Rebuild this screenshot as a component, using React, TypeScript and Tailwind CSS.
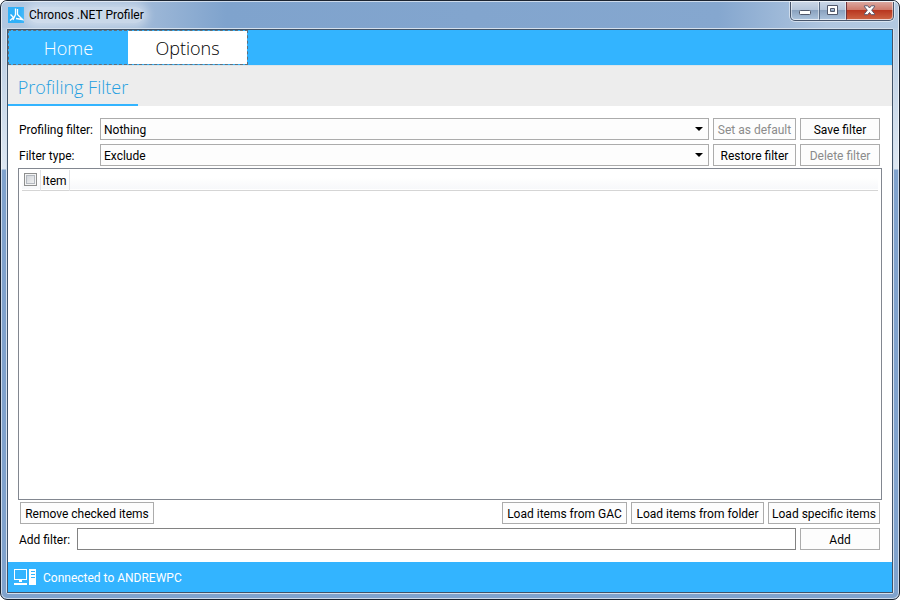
import React from 'react';

function AppLogo() {
  return (
    <svg width="16" height="16" viewBox="0 0 16 16" className="shrink-0" aria-hidden="true">
      <rect width="16" height="16" fill="#2fb0f8" />
      <path d="M7.500 1.500v6L5 13M2.500 7.500L5.500 10.500 2 13.500M9.500 2v5.500L14.500 12.500 8 11.500" fill="none" stroke="#fff" strokeWidth="1.300" />
    </svg>
  );
}

function ComputerIcon() {
  return (
    <svg width="22" height="16" viewBox="0 0 22 16" className="shrink-0" shapeRendering="crispEdges" aria-hidden="true">
      <path d="M.5.5h12v10H.5z" fill="none" stroke="#fff" />
      <path d="M5 11h3v2H5zM0 14h13v2H0zM15 0h7v16h-7z" fill="#fff" />
      <path d="M17 2.500h4M17 5.500h4M17 8.500h4" stroke="#33b4ff" />
    </svg>
  );
}

function CaptionButtons() {
  const shine = 'flex h-full items-center justify-center border border-t-0 border-white/50';
  const glass = 'bg-[linear-gradient(#c9d6e6_0%,#b4c5da_45%,#8aa2bf_50%,#a9c0da_100%)]';
  return (
    <div className="flex h-[19px] self-start overflow-hidden rounded-b-[5px] border border-t-0 border-[#47556b] shadow-[0_0_0_1px_rgba(255,255,255,0.5)]">
      <button type="button" aria-label="Minimize" className={`${shine} ${glass} w-[28px] rounded-bl-[4px]`}>
        <svg width="13" height="6" viewBox="0 0 13 6" className="mt-1">
          <rect x=".5" y=".5" width="11" height="4" rx="1" fill="#fff" stroke="#50586b" />
        </svg>
      </button>
      <button type="button" aria-label="Maximize" className={`${shine} ${glass} w-[27px] border-l-[#596b84]`}>
        <svg width="13" height="11" viewBox="0 0 13 11">
          <path d="M1.500.5h10v9h-10zM4.500 3.500v3h4v-3z" fill="#fff" fillRule="evenodd" stroke="#50586b" />
        </svg>
      </button>
      <button type="button" aria-label="Close" className={`${shine} w-[47px] rounded-br-[4px] border-l-[#70323a] bg-[linear-gradient(#dba79f_0%,#cf7b6c_45%,#b93720_50%,#cc6141_100%)]`}>
        <svg width="13" height="11" viewBox="0 0 13 11">
          <path d="M1.500.8h3.200l1.800 2.200L8.300.8h3.200v1L8.700 5.200l2.800 3.500v1H8.300L6.500 7.500 4.700 9.700H1.500v-1l2.800-3.500-2.800-3.400z" fill="#fff" stroke="#59566b" />
        </svg>
      </button>
    </div>
  );
}

type ButtonProps = { children: React.ReactNode; disabled?: boolean; className?: string };

function Button({ children, disabled, className = '' }: ButtonProps) {
  return (
    <button
      type="button"
      disabled={disabled}
      className={`h-[22px] shrink-0 whitespace-nowrap border border-[#acacac] bg-[#fdfdfd] px-0.5 pt-0.5 text-center disabled:text-[#8b8b8b] ${className}`}
    >
      {children}
    </button>
  );
}

function Dropdown({ id, value, options }: { id: string; value: string; options: string[] }) {
  return (
    <div className="relative min-w-0 flex-1">
      <select id={id} defaultValue={value} className="block h-[22px] w-full appearance-none border border-[#acacac] bg-[#fdfdfd] pt-0.5 pl-[3px] pr-5">
        {options.map((option) => (
          <option key={option}>{option}</option>
        ))}
      </select>
      <svg width="8" height="4" viewBox="0 0 8 4" className="pointer-events-none absolute right-[6px] top-[9px]" aria-hidden="true">
        <path d="M0 0h8L4 4z" />
      </svg>
    </div>
  );
}

export default function App() {
  return (
    <div className="h-screen bg-white font-[Roboto,'Open_Sans',sans-serif] text-[12px] leading-4 text-black">
      <div className="flex h-full flex-col rounded-[7px] border border-[#1b2431] bg-[linear-gradient(#b1c7df_0px,#dde7f2_168px,#80a3cd_169px)] shadow-[inset_0_0_0_1px_rgba(255,255,255,0.6)]">
        <header className="mx-px flex h-[27px] shrink-0 items-center rounded-t-[5px] border-t border-white/60 bg-[linear-gradient(90deg,#b2c8e1_0%,#a2bbd9_15%,#7fa3cd_25%,#85a7cf_80%,#b0c6df_92%,#b3c9e1_100%)] pl-[6px] pr-[4px]">
          <AppLogo />
          <h1 className="ml-[5px] rounded-full bg-white/40 font-normal shadow-[0_0_8px_4px_rgba(255,255,255,0.4)]">Chronos .NET Profiler</h1>
          <div className="flex-1" />
          <CaptionButtons />
        </header>

        <div className="mx-[5px] mb-[5px] flex min-h-0 flex-1 flex-col rounded-[2px] border border-[#d4e0ed]">
          <div className="flex min-h-0 flex-1 flex-col border border-[#405369] bg-white">
            <nav className="flex h-[35px] shrink-0 bg-[#33b4ff] font-['Open_Sans',sans-serif] text-[18px] leading-6 font-light" aria-label="Main">
              <div className="flex border border-dashed border-[#626e78]">
                <button type="button" className="w-[119px] text-white">Home</button>
                <button type="button" className="w-[119px] bg-white" aria-current="page">Options</button>
              </div>
            </nav>
            <div className="flex h-[41px] shrink-0 border-t border-[#dce5e9] bg-[#ededed]">
              <button type="button" className="w-[130px] border-b-2 border-[#33b4ff] pt-1 text-center font-['Open_Sans',sans-serif] text-[18px] leading-6 font-light text-[#259fe0]">
                Profiling Filter
              </button>
            </div>

            <main className="flex min-h-0 flex-1 flex-col px-[10px] py-3">
              <div className="flex flex-col gap-1 pr-0.5">
                <div className="flex items-center gap-1">
                  <label htmlFor="profiling-filter" className="w-[78px] shrink-0 whitespace-nowrap pt-0.5 pl-px">Profiling filter:</label>
                  <Dropdown id="profiling-filter" value="Nothing" options={['Nothing']} />
                  <Button disabled className="w-[83px]">Set as default</Button>
                  <Button className="w-[80px]">Save filter</Button>
                </div>
                <div className="flex items-center gap-1">
                  <label htmlFor="filter-type" className="w-[78px] shrink-0 whitespace-nowrap pt-0.5 pl-px">Filter type:</label>
                  <Dropdown id="filter-type" value="Exclude" options={['Exclude', 'Include']} />
                  <Button className="w-[83px]">Restore filter</Button>
                  <Button disabled className="w-[80px]">Delete filter</Button>
                </div>
              </div>

              <div className="mt-0.5 min-h-0 flex-1 border border-[#828790] px-[3px] pt-px">
                <table className="w-full border-collapse">
                  <thead>
                    <tr className="h-5 border-b border-[#d5d5d5] bg-[linear-gradient(#ffffff_0%,#ffffff_40%,#f7f8fa_100%)]">
                      <th className="w-[18px] border-r border-[#e2e3e6] p-0">
                        <input
                          type="checkbox"
                          aria-label="Check all items"
                          className="mx-auto block size-[13px] appearance-none border border-[#8e8f8f] bg-[linear-gradient(135deg,#cbcfd5,#f6f6f6)] shadow-[inset_0_0_0_1px_#f4f4f4,inset_0_0_0_2px_#b3b8bf]"
                        />
                      </th>
                      <th className="w-[29px] border-r border-[#e2e3e6] p-0 pt-0.5 text-center font-normal">Item</th>
                      <th className="p-0" aria-hidden="true" />
                    </tr>
                  </thead>
                </table>
              </div>

              <div className="mt-0.5 flex gap-1 px-0.5">
                <Button className="w-[134px]">Remove checked items</Button>
                <div className="flex-1" />
                <Button className="w-[125px]">Load items from GAC</Button>
                <Button className="w-[133px]">Load items from folder</Button>
                <Button className="w-[112px]">Load specific items</Button>
              </div>
              <div className="mt-1 flex items-center gap-1 pr-0.5">
                <label htmlFor="add-filter" className="w-[55px] shrink-0 whitespace-nowrap pt-0.5 pl-px">Add filter:</label>
                <input id="add-filter" type="text" className="h-[22px] min-w-0 flex-1 border border-[#828282] bg-white px-1" />
                <Button className="w-[80px]">Add</Button>
              </div>
            </main>

            <footer className="flex h-[30px] shrink-0 items-center gap-[7px] bg-[#33b4ff] pl-[6px] text-white">
              <ComputerIcon />
              <span className="pt-0.5">Connected to ANDREWPC</span>
            </footer>
          </div>
        </div>
      </div>
    </div>
  );
}
